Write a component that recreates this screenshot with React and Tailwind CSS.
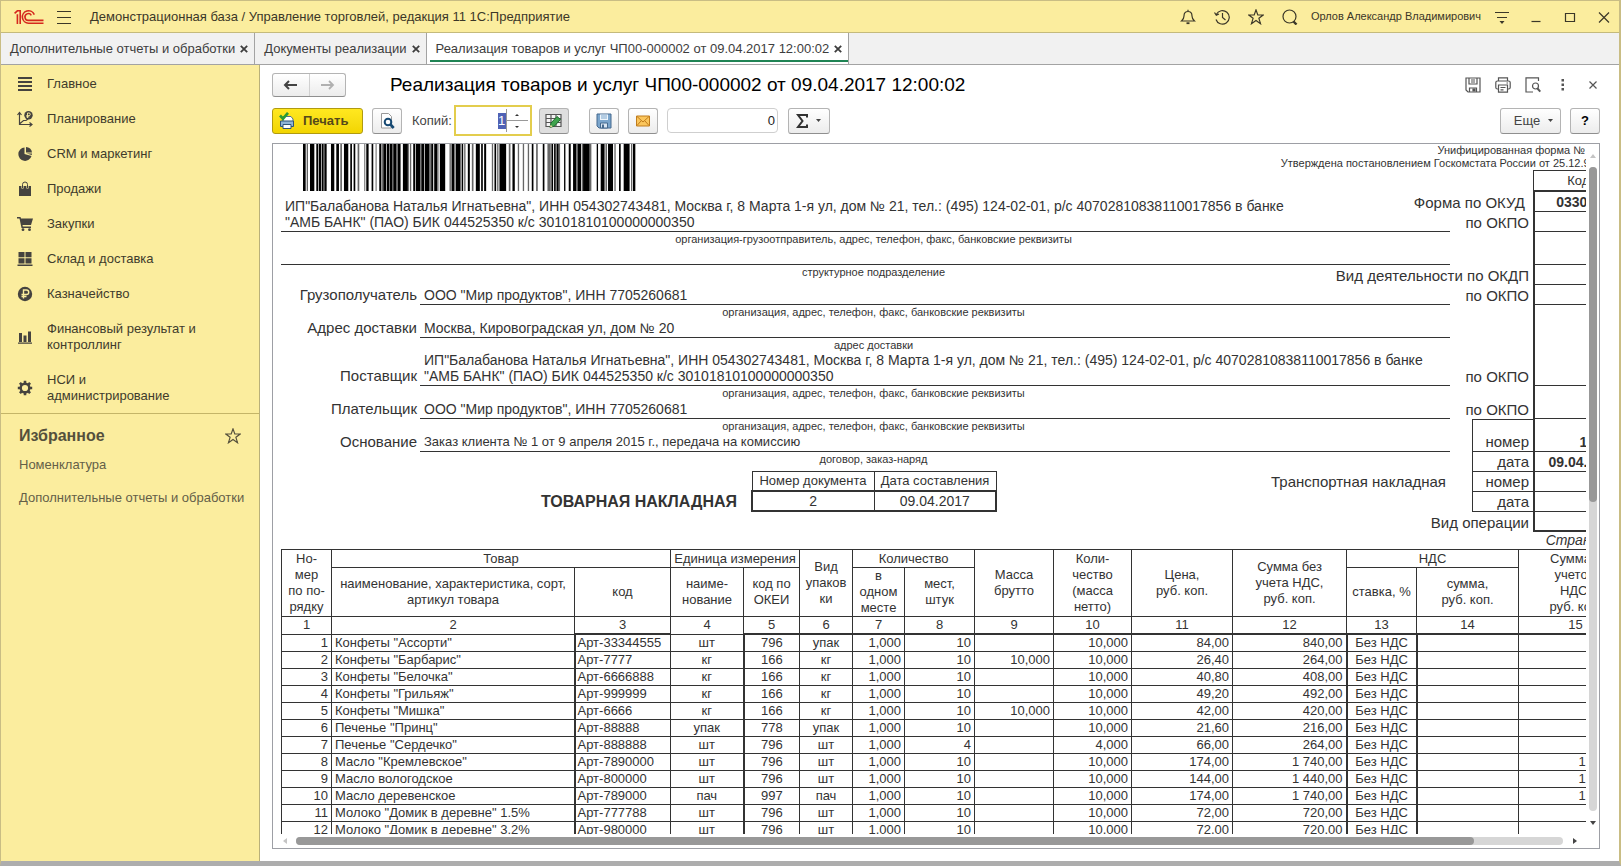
import { useState } from "react";

const sections = [
  { label: "Главное", icon: "main" },
  { label: "Планирование", icon: "plan" },
  { label: "CRM и маркетинг", icon: "pie" },
  { label: "Продажи", icon: "bag" },
  { label: "Закупки", icon: "cart" },
  { label: "Склад и доставка", icon: "boxes" },
  { label: "Казначейство", icon: "ruble" },
  { label: "Финансовый результат и контроллинг", icon: "bars" },
  { label: "НСИ и администрирование", icon: "gear" },
];

const favorites = ["Номенклатура", "Дополнительные отчеты и обработки"];

const docTitle = "Реализация товаров и услуг ЧП00-000002 от 09.04.2017 12:00:02";

const tabs = ["Дополнительные отчеты и обработки", "Документы реализации", docTitle];

const seller =
  'ИП"Балабанова Наталья Игнатьевна", ИНН 054302743481, Москва г, 8 Марта 1-я ул, дом № 21, тел.: (495) 124-02-01, р/с 40702810838110017856 в банке';
const sellerBank = '"АМБ БАНК" (ПАО) БИК 044525350 к/с 30101810100000000350';
const orgHint = "организация, адрес, телефон, факс, банковские реквизиты";

// name, article, unit, OKEI code, packing, places, gross, net, price, sum, total with VAT
const goods = [
  ['Конфеты "Ассорти"', "Арт-33344555", "шт", "796", "упак", "10", "", "10,000", "84,00", "840,00", "840,00"],
  ['Конфеты "Барбарис"', "Арт-7777", "кг", "166", "кг", "10", "10,000", "10,000", "26,40", "264,00", "264,00"],
  ['Конфеты "Белочка"', "Арт-6666888", "кг", "166", "кг", "10", "", "10,000", "40,80", "408,00", "408,00"],
  ['Конфеты "Грильяж"', "Арт-999999", "кг", "166", "кг", "10", "", "10,000", "49,20", "492,00", "492,00"],
  ['Конфеты "Мишка"', "Арт-6666", "кг", "166", "кг", "10", "10,000", "10,000", "42,00", "420,00", "420,00"],
  ['Печенье "Принц"', "Арт-88888", "упак", "778", "упак", "10", "", "10,000", "21,60", "216,00", "216,00"],
  ['Печенье "Сердечко"', "Арт-888888", "шт", "796", "шт", "4", "", "4,000", "66,00", "264,00", "264,00"],
  ['Масло "Кремлевское"', "Арт-7890000", "шт", "796", "шт", "10", "", "10,000", "174,00", "1 740,00", "1 740,00"],
  ["Масло вологодское", "Арт-800000", "шт", "796", "шт", "10", "", "10,000", "144,00", "1 440,00", "1 440,00"],
  ["Масло деревенское", "Арт-789000", "пач", "997", "пач", "10", "", "10,000", "174,00", "1 740,00", "1 740,00"],
  ['Молоко "Домик в деревне" 1.5%', "Арт-777788", "шт", "796", "шт", "10", "", "10,000", "72,00", "720,00", "720,00"],
  ['Молоко "Домик в деревне" 3.2%', "Арт-980000", "шт", "796", "шт", "10", "", "10,000", "72,00", "720,00", "720,00"],
];

const columnWidths = [50, 243, 96, 73, 56, 53, 52, 70, 79, 78, 101, 114, 70, 102, 114];

// [x, width] of each stripe
const blackBars = [
  [0, 8], [21, 13], [40, 6], [48, 6], [56, 6], [64, 7], [84, 10], [100, 8], [123, 13], [142, 5], [152, 5],
  [190, 7], [206, 5], [229, 6], [241, 9], [252, 7], [261, 8], [271, 10], [285, 8], [300, 15], [331, 6],
  [339, 13], [355, 9], [366, 14], [385, 6], [394, 9], [411, 16], [446, 8], [459, 14], [477, 4], [495, 6],
  [519, 12], [535, 5], [544, 6], [575, 5], [590, 20], [629, 7], [687, 5], [720, 5], [746, 5],
  [754, 5], [762, 6], [784, 4], [798, 6], [811, 10], [824, 11], [841, 20], [882, 4], [894, 10], [916, 15],
  [949, 5], [963, 16], [991, 7],
];
const grayBars = [
  [11, 4], [112, 5], [164, 5], [184, 3], [218, 3], [236, 4], [259, 2], [281, 4], [315, 3], [321, 4], [352, 3],
  [380, 4], [403, 4], [440, 4], [454, 4], [473, 3], [484, 4], [507, 5], [567, 4], [583, 4], [618, 5], [645, 4],
  [660, 4], [675, 4], [700, 5], [734, 10], [759, 3], [768, 4], [821, 3], [837, 4], [861, 5], [904, 4], [909, 4],
  [935, 4], [979, 3], [985, 4],
];

const Barcode = () => (
  <svg className="ml-[22px] h-[47px] w-[333px]" viewBox="0 0 1000 47" preserveAspectRatio="none">
    {blackBars.map(([x, w]) => (
      <rect key={x} x={x} width={w} height="47" fill="#000" />
    ))}
    {grayBars.map(([x, w]) => (
      <rect key={x} x={x} width={w} height="47" fill="#666" />
    ))}
  </svg>
);

const Logo = () => (
  <svg width="30" height="16" viewBox="0 0 30 16" fill="none" stroke="#d5281e" strokeWidth="1.6">
    <path d="M0.6 4.4 3.4 1.8H6.2V15M3.4 5.2V15" />
    <path d="M20.3 5.6A6.2 6.2 0 1 0 14.7 14.2H29.5" />
    <path d="M17.3 6.3A3.4 3.4 0 1 0 14.7 11.4H29.5" />
  </svg>
);

const SectionIcon = ({ name }) => {
  const c = "#45433f";
  return (
    <svg width="16" height="16" viewBox="0 0 16 16" fill={c} className="shrink-0">
      {name === "main" && <path d="M1 1h14v2H1zM1 5h14v2H1zM1 9h14v2H1zM1 13h14v2H1z" />}
      {name === "plan" && (
        <>
          <path d="M2.5 14V2M.5 4l2-2.5L4.5 4M2.5 13.500h12M12.500 11.500l2.500 2-2.500 2M3 12.500 6.500 9.500H9L11 8" fill="none" stroke={c} strokeWidth="1.200" />
          <circle cx="11.5" cy="4.200" r="4.200" />
          <path d="M10.500 7V2h1.500a1.200 1.200 0 0 1 0 2.600H9.300M9.300 5.800h3" fill="none" stroke="#fbed9e" strokeWidth="0.900" />
        </>
      )}
      {name === "pie" && (
        <>
          <path d="M7.500 1.500A6.700 6.700 0 1 0 14.500 10L7.500 8z" />
          <path d="M9 1a6 6 0 0 1 6 5.500H9zM9.500 7.500H15L14.800 9z" />
        </>
      )}
      {name === "bag" && (
        <>
          <path d="M2 5h12v10H2z" />
          <path d="M5.500 7.500V3.500a2.500 2.500 0 0 1 5 0v4" fill="none" stroke="#fbed9e" strokeWidth="2.200" />
          <path d="M5.500 7V3.500a2.500 2.500 0 0 1 5 0V7" fill="none" stroke={c} strokeWidth="1" />
        </>
      )}
      {name === "cart" && (
        <>
          <path d="M0 1h3.500l.5 1.500h12L14 9H5.500l.3 1.500H14V12H4.500L2.500 2.500H0z" />
          <circle cx="6" cy="13.700" r="1.400" />
          <circle cx="12.500" cy="13.700" r="1.400" />
        </>
      )}
      {name === "boxes" && <path d="M1.500 1h6v5.300h-6zM8.500 1h6v5.300h-6zM1.500 7.200h6v5.300h-6zM8.500 7.200h6v5.300h-6zM.5 13.500h15V15H.5z" />}
      {name === "ruble" && (
        <>
          <circle cx="8" cy="8" r="7.200" />
          <path d="M6.500 12.500V4h3a2.200 2.200 0 0 1 0 4.500h-5M4.500 10.500h5" fill="none" stroke="#fbed9e" strokeWidth="1.400" />
        </>
      )}
      {name === "bars" && <path d="M2 4h3v9H2zM6.500 6.500h3V13h-3zM11 2.500h3V13h-3zM1 13.500h14v1.200H1z" />}
      {name === "gear" && (
        <>
          <circle cx="8" cy="8" r="4.300" fill="none" stroke={c} strokeWidth="2.400" />
          <path d="M8 .8v3M8 12.200v3M.8 8h3M12.200 8h3M2.900 2.900 5 5M11 11l2.100 2.100M13.100 2.900 11 5M5 11l-2.100 2.100" stroke={c} strokeWidth="2.600" />
        </>
      )}
    </svg>
  );
};

const Star = () => (
  <svg width="16" height="16" viewBox="0 0 16 16" fill="none" stroke="currentColor" strokeWidth="1.200">
    <path d="M8 .9 9.800 6h5.400l-4.300 3.300 1.600 5.400L8 11.500l-4.500 3.200 1.600-5.400L.8 6h5.400z" />
  </svg>
);

const Line = ({ children, size = 16 }) => (
  <svg width={size} height={size} viewBox="0 0 16 16" fill="none" stroke="currentColor" strokeWidth="1.200">
    {children}
  </svg>
);

const IconButton = ({ label, children, className = "" }) => (
  <button aria-label={label} className={`flex h-6 items-center justify-center ${className}`}>
    {children}
  </button>
);

const ToolButton = ({ label, children, className = "bg-linear-to-b from-white to-[#ececec]" }) => (
  <button
    aria-label={label}
    className={`flex h-[26px] w-[30px] items-center justify-center rounded-[3px] border border-[#b4b4b4] border-b-[#8f8f8f] ${className}`}
  >
    {children}
  </button>
);

const TitleBar = () => (
  <header className="flex h-8 items-center border-b border-[#c4ba7c] bg-[#fbed9e] pl-[13px] text-[#3b3728]">
    <Logo />
    <IconButton label="Меню" className="ml-3">
      <Line>
        <path d="M1 2.500h14M1 8.500h14M1 14.500h14" />
      </Line>
    </IconButton>
    <h1 className="ml-[18px] text-[13px]">
      Демонстрационная база / Управление торговлей, редакция 11 1С:Предприятие
    </h1>
    <div className="ml-auto flex items-center gap-1">
      <IconButton label="Оповещения" className="w-[30px]">
        <Line>
          <path d="M1.500 12c1.500-1.200 2.500-2.500 2.500-5 0-2.700 1.500-4.500 4-4.500S12 4.300 12 7c0 2.500 1 3.800 2.500 5zM8 2.500V.8" />
          <path d="M6.500 14.200h3" strokeWidth="1.800" />
        </Line>
      </IconButton>
      <IconButton label="История" className="w-[30px]">
        <Line>
          <path d="M2.300 5.500A6.800 6.800 0 1 1 2 10.500M8.500 4v4.500l3 2.500M.5 3.500l1.800 2.700L5 5" />
        </Line>
      </IconButton>
      <IconButton label="Избранное" className="w-[30px]">
        <Star />
      </IconButton>
      <IconButton label="Поиск" className="w-[30px]">
        <Line>
          <circle cx="7.500" cy="7.500" r="6.500" />
          <path d="m11.500 12.500 3 3" strokeWidth="2.400" />
        </Line>
      </IconButton>
      <span className="px-[2px] text-[11px]">Орлов Александр Владимирович</span>
      <IconButton label="Настройки" className="w-[30px]">
        <Line>
          <path d="M1 3.500h14M3 8.500h10" />
          <path d="M5.500 12h5L8 15z" fill="currentColor" stroke="none" />
        </Line>
      </IconButton>
      <IconButton label="Свернуть" className="w-[30px]">
        <Line>
          <path d="M3.500 12.500h9" />
        </Line>
      </IconButton>
      <IconButton label="Развернуть" className="w-[30px]">
        <Line>
          <path d="M3.500 4.500h9v8h-9z" />
        </Line>
      </IconButton>
      <IconButton label="Закрыть" className="w-[30px]">
        <Line>
          <path d="m3 3.500 10 10M13 3.500l-10 10" />
        </Line>
      </IconButton>
    </div>
  </header>
);

const TabBar = ({ active, onSelect }) => (
  <nav className="flex h-8 border-b border-[#a3a3a3] bg-[#f1f1f1] text-[13px] text-[#3d3d3d]">
    {tabs.map((tab, i) => (
      <div
        key={tab}
        className={`flex items-center gap-[5px] border-r border-[#a3a3a3] pr-[6px] pl-[9px] ${
          active === i
            ? "bg-white shadow-[inset_3px_0_0_white,inset_0_-2px_0_white,inset_0_-4px_0_#1f8454]"
            : ""
        }`}
      >
        <button onClick={() => onSelect(i)}>{tab}</button>
        <button aria-label="Закрыть вкладку">
          <svg width="8" height="8" viewBox="0 0 8 8" stroke="#3d3d3d" strokeWidth="1.800">
            <path d="m.8.8 6.400 6.400M7.200.8.8 7.200" />
          </svg>
        </button>
      </div>
    ))}
  </nav>
);

const Sidebar = () => (
  <aside className="w-[259px] shrink-0 border-r border-[#b9b07a] bg-[#fbed9e] text-[13px] leading-4 text-[#403b2c]">
    <ul className="flex flex-col gap-[19px] border-b border-[#c4b568] pt-[11px] pr-12 pb-[9px] pl-4">
      {sections.map((s) => (
        <li key={s.label}>
          <a href="#" className="flex items-center gap-[14px]">
            <SectionIcon name={s.icon} />
            <span>{s.label}</span>
          </a>
        </li>
      ))}
    </ul>
    <div className="px-[18px] pt-3">
      <div className="flex items-center justify-between text-[#55503c]">
        <h2 className="text-[16px] leading-5 font-bold">Избранное</h2>
        <button aria-label="Настроить избранное">
          <Star />
        </button>
      </div>
      <ul className="mt-[11px] flex flex-col gap-[17px] whitespace-nowrap text-[#645f48]">
        {favorites.map((f) => (
          <li key={f}>
            <a href="#">{f}</a>
          </li>
        ))}
      </ul>
    </div>
  </aside>
);

const FormHeader = () => (
  <div className="flex h-6 items-center">
    <div className="flex h-6 w-[74px] rounded-[3px] border border-[#b4b4b4] border-b-[#8f8f8f] bg-linear-to-b from-white to-[#ececec]">
      <button aria-label="Назад" className="flex flex-1 items-center justify-center border-r border-[#d0d0d0]">
        <svg width="15" height="12" viewBox="0 0 15 12" fill="none" stroke="#444" strokeWidth="2">
          <path d="M14 6H2M6 2 2 6l4 4" />
        </svg>
      </button>
      <button aria-label="Вперед" className="flex flex-1 items-center justify-center">
        <svg width="15" height="12" viewBox="0 0 15 12" fill="none" stroke="#b0b0b0" strokeWidth="1.800">
          <path d="M1 6h12M9 2l4 4-4 4" />
        </svg>
      </button>
    </div>
    <h2 className="ml-11 text-[19px] text-black">{docTitle}</h2>
    <div className="-mr-2 ml-auto flex items-center text-[#555]">
      <IconButton label="Сохранить" className="w-[30px]">
        <Line>
          <path d="M1 1h14v14H3l-2-2zM4 1v6h8V1M6 3h4M6 5h4" />
          <path d="M4.500 15v-4h7v4" />
          <path d="M8 12h2v2H8z" fill="currentColor" />
        </Line>
      </IconButton>
      <IconButton label="Печать" className="w-[30px]">
        <Line>
          <path d="M3.500 4V.8h9V4M3.500 12H2.500C1.500 12 .8 11.500.8 10.500v-5C.8 4.500 1.500 4 2.500 4h11c1 0 1.700.5 1.700 1.500v5c0 1-.7 1.500-1.700 1.500h-1" />
          <path d="M3.500 8h9v7.200h-9zM5.500 10.500h5M5.500 12.800h3M11.500 6h1.500" />
        </Line>
      </IconButton>
      <IconButton label="Просмотр" className="w-[30px]">
        <Line>
          <path d="M13.500 4V.8H1V15h7" />
          <circle cx="10.500" cy="9" r="3" />
          <path d="m12.500 11.500 2.800 3.200" strokeWidth="2" />
        </Line>
      </IconButton>
      <IconButton label="Еще действия" className="w-[30px]">
        <svg width="4" height="12" viewBox="0 0 4 12" fill="#555">
          <path d="M.5 0h2.500v2.500H.5zM.5 4.500h2.500V7H.5zM.5 9h2.500v2.500H.5z" />
        </svg>
      </IconButton>
      <IconButton label="Закрыть форму" className="w-[30px]">
        <svg width="8" height="8" viewBox="0 0 8 8" stroke="#555" strokeWidth="1.200">
          <path d="m.5.5 7 7M7.500.5l-7 7" />
        </svg>
      </IconButton>
    </div>
  </div>
);

const Toolbar = () => {
  const [copies, setCopies] = useState("1");

  return (
    <div className="mt-2 flex h-[31px] items-center text-[13px] text-[#444]">
      <button className="flex h-[26px] w-[91px] items-center gap-2 rounded-[3px] border border-[#b09a10] bg-linear-to-b from-[#ffe81f] to-[#f2d500] pl-1.5 font-bold text-[#54491a]">
        <svg width="16" height="18" viewBox="0 0 16 18">
          <path d="M4 8V4.500h8L14 7v3H4z" fill="#fff" stroke="#50708c" />
          <path d="M1.500 9h13v5.500h-13z" fill="#8fb4d6" stroke="#2f5478" />
          <path d="M4 12.500h8v4H4z" fill="#fff" stroke="#2f5478" />
          <path d="m1 3.500 3 3.200L9 .8" fill="none" stroke="#2a9b32" strokeWidth="2.600" />
        </svg>
        Печать
      </button>
      <div className="ml-[9px]">
        <ToolButton label="Предварительный просмотр">
          <svg width="16" height="16" viewBox="0 0 16 16" fill="none">
            <path d="M2.500.5h7l3 3V15h-10z" fill="#fff" stroke="#999" />
            <circle cx="9" cy="9" r="3.300" stroke="#174a73" strokeWidth="2" />
            <path d="m11.500 11.500 3.200 3.500" stroke="#174a73" strokeWidth="2.600" />
          </svg>
        </ToolButton>
      </div>
      <label htmlFor="copies" className="ml-[10px]">
        Копий:
      </label>
      <div className="ml-[2px] flex h-[31px] w-[78px] items-center border-2 border-[#e3cd4d] bg-white pr-[2px]">
        <input
          id="copies"
          value={copies}
          onChange={(e) => setCopies(e.target.value)}
          className="ml-auto h-4 w-2 bg-[#4f62b5] text-white outline-none"
        />
        <div className="flex h-[23px] w-[22px] flex-col border-l border-[#999]">
          <button aria-label="Увеличить" className="flex flex-1 items-center justify-center border-b border-[#999]">
            <svg width="4" height="2" viewBox="0 0 4 2" fill="#333">
              <path d="M0 2 2 0l2 2z" />
            </svg>
          </button>
          <button aria-label="Уменьшить" className="flex flex-1 items-center justify-center">
            <svg width="4" height="2" viewBox="0 0 4 2" fill="#333">
              <path d="m0 0 2 2 2-2z" />
            </svg>
          </button>
        </div>
      </div>
      <div className="ml-[7px]">
        <ToolButton label="Редактирование" className="bg-[#dedede]">
          <svg width="17" height="16" viewBox="0 0 17 16" fill="none">
            <path d="M1 1.500h15v12H1z" fill="#f4f4f4" />
            <path d="M1 1.500h15v12H1zM1 5.500h15M1 9.500h15M6 1.500v12M11 1.500v12" stroke="#555" strokeWidth="1.200" />
            <path d="m5 14.500 1-4.500 6-6.500 3.500 3-6 6.500z" fill="#3fa34d" stroke="#1c6b2b" />
            <path d="m5 14.500.6-2.700 2 1.800z" fill="#f0d9a0" />
          </svg>
        </ToolButton>
      </div>
      <div className="ml-5 flex gap-[9px]">
        <ToolButton label="Сохранить файл">
          <svg width="16" height="16" viewBox="0 0 16 16">
            <path d="M1 1h14v14H3l-2-2z" fill="#7aa5cc" stroke="#44698e" />
            <path d="M4 1.500h8V7H4z" fill="#eef5fb" />
            <path d="M5 3h6M5 5h6" stroke="#7aa5cc" />
            <path d="M4.500 10h7v5h-7z" fill="#d9e6f2" stroke="#44698e" />
            <path d="M6 11.500h2V15H6z" fill="#44698e" />
          </svg>
        </ToolButton>
        <ToolButton label="Отправить почтой">
          <svg width="14" height="12" viewBox="0 0 14 12">
            <path d="M.5 1h13v10H.5z" fill="#fbc65c" stroke="#c07c1c" />
            <path d="m1 1.500 6 5.500 6-5.500M1 10.500l4-4.500M13 10.500 9 6" fill="none" stroke="#c07c1c" />
          </svg>
        </ToolButton>
        <input
          aria-label="Сумма"
          defaultValue="0"
          className="h-[25px] w-[111px] rounded border border-[#cfcfcf] bg-white px-[2px] text-right text-[#222]"
        />
      </div>
      <button
        aria-label="Сумма выделенных"
        className="ml-[10px] flex h-[26px] w-[42px] items-center justify-center gap-2 rounded-[3px] border border-[#b4b4b4] border-b-[#8f8f8f] bg-linear-to-b from-white to-[#ececec]"
      >
        <svg width="12" height="14" viewBox="0 0 12 14" fill="none" stroke="#333" strokeWidth="2">
          <path d="M11 3.500V1H2l4.500 6L2 13h9v-2.500" />
        </svg>
        <Caret />
      </button>
      <div className="ml-auto flex gap-[9px]">
        <button className="flex h-[26px] w-[61px] items-center justify-center gap-2 rounded-[3px] border border-[#b4b4b4] border-b-[#8f8f8f] bg-linear-to-b from-white to-[#ececec] pl-1.5">
          Еще
          <Caret />
        </button>
        <ToolButton label="Справка">
          <span className="font-bold text-black">?</span>
        </ToolButton>
      </div>
    </div>
  );
};

const Caret = () => (
  <svg width="5" height="3" viewBox="0 0 5 3" fill="#444">
    <path d="M0 0h5L2.500 3z" />
  </svg>
);

const Hint = ({ children }) => <p className="pl-4 text-center text-[11px] leading-[14px]">{children}</p>;

const Field = ({ label, className = "h-[19px]", children }) => (
  <div className={`flex items-end text-[14px] leading-4 ${className}`}>
    <span className="w-[139px] pr-[3px] pb-[2px] text-right text-[15px]">{label}</span>
    <span className="flex-1 border-b border-[#333] pb-px pl-1">{children}</span>
  </div>
);

const CodeRow = ({ label, code, height = "h-5", boxed = false, top = false, line = true, labelClass = "" }) => (
  <div className={`flex text-[15px] leading-[18px] ${height}`}>
    <div className="flex min-w-0 flex-1 justify-end">
      <span
        className={`flex shrink-0 items-end justify-end whitespace-nowrap pr-1 ${
          boxed ? "w-[61px] border-b border-l border-[#333]" : ""
        } ${top ? "border-t" : ""} ${labelClass}`}
      >
        {label}
      </span>
    </div>
    <div
      className={`flex w-[99px] shrink-0 items-end justify-center border-l-2 border-[#333] text-[14px] font-bold ${
        line ? "border-b" : "border-b-2"
      }`}
    >
      {code}
    </div>
  </div>
);

const Requisites = () => (
  <div className="flex">
    <div className="flex-1">
      <Barcode />
      <p className="h-[41px] border-b border-[#333] pt-[7px] pl-1 text-[14px] leading-4">
        {seller}
        <br />
        {sellerBank}
      </p>
      <div className="h-[33px] border-b border-[#333]">
        <Hint>организация-грузоотправитель, адрес, телефон, факс, банковские реквизиты</Hint>
      </div>
      <Hint>структурное подразделение</Hint>
      <Field label="Грузополучатель" className="h-[26px]">
        ООО "Мир продуктов", ИНН 7705260681
      </Field>
      <Hint>{orgHint}</Hint>
      <Field label="Адрес доставки">Москва, Кировоградская ул, дом № 20</Field>
      <Hint>адрес доставки</Hint>
      <Field label="Поставщик" className="h-[34px]">
        {seller}
        <br />
        {sellerBank}
      </Field>
      <Hint>{orgHint}</Hint>
      <Field label="Плательщик">ООО "Мир продуктов", ИНН 7705260681</Field>
      <Hint>{orgHint}</Hint>
      <Field label="Основание">
        <span className="text-[13px]">Заказ клиента № 1 от 9 апреля 2015 г., передача на комиссию</span>
      </Field>
      <Hint>договор, заказ-наряд</Hint>
      <div className="mt-[5px] flex">
        <h3 className="w-[470px] self-end pr-[14px] text-right text-[16px] leading-5 font-bold">
          ТОВАРНАЯ НАКЛАДНАЯ
        </h3>
        <table className="w-[246px] table-fixed border-collapse text-center text-[13px] leading-[18px]">
          <thead>
            <tr>
              <th className="border border-[#333] font-normal">Номер документа</th>
              <th className="border border-[#333] font-normal">Дата составления</th>
            </tr>
          </thead>
          <tbody>
            <tr className="border-2 border-[#333] text-[14px]">
              <td className="border-r border-[#333]">2</td>
              <td>09.04.2017</td>
            </tr>
          </tbody>
        </table>
        <span className="ml-auto pr-1 text-[15px] leading-[22px]">Транспортная накладная</span>
      </div>
    </div>

    <div className="w-[182px]">
      <div className="flex h-[26px] flex-col items-end text-[11px] leading-[13px] whitespace-nowrap">
        <span>Унифицированная форма № ТОРГ-12</span>
        <span>Утверждена постановлением Госкомстата России от 25.12.98 № 132</span>
      </div>
      <div className="ml-[83px] flex h-[22px] items-center justify-center border-t border-b-2 border-l border-[#333] text-[13px]">
        Коды
      </div>
      <CodeRow label="Форма по ОКУД" labelClass="pr-2" code="0330212" />
      <CodeRow label="по ОКПО" />
      <CodeRow height="h-[33px]" />
      <CodeRow label="Вид деятельности по ОКДП" />
      <CodeRow label="по ОКПО" />
      <CodeRow label="по ОКПО" height="h-[81px]" />
      <CodeRow label="по ОКПО" height="h-[33px]" />
      <CodeRow label="номер" height="h-[33px]" boxed top code="1" />
      <CodeRow label="дата" boxed code="09.04.2015" />
      <CodeRow label="номер" boxed />
      <CodeRow label="дата" boxed />
      <CodeRow label="Вид операции" line={false} />
      <p className="pr-[6px] text-right text-[14px] leading-[17px] italic">Страница 1</p>
    </div>
  </div>
);

const Head = ({ children, ...rest }) => (
  <th className="border border-[#333] p-0 font-normal whitespace-pre-line" {...rest}>
    {children}
  </th>
);

const GoodsTable = () => {
  const cell = "border border-[#333] p-0";
  const num = `${cell} pr-[3px] text-right`;
  const mid = `${cell} text-center`;

  return (
    <table className="w-full table-fixed border-collapse text-[13px] leading-4 whitespace-nowrap">
      <colgroup>
        {columnWidths.map((w, i) => (
          <col key={i} style={{ width: w }} />
        ))}
      </colgroup>
      <thead>
        <tr className="h-[18px]">
          <Head rowSpan={2}>{"Но-\nмер\nпо по-\nрядку"}</Head>
          <Head colSpan={2}>Товар</Head>
          <Head colSpan={2}>Единица измерения</Head>
          <Head rowSpan={2}>{"Вид\nупаков\nки"}</Head>
          <Head colSpan={2}>Количество</Head>
          <Head rowSpan={2}>{"Масса\nбрутто"}</Head>
          <Head rowSpan={2}>{"Коли-\nчество\n(масса\nнетто)"}</Head>
          <Head rowSpan={2}>{"Цена,\nруб. коп."}</Head>
          <Head rowSpan={2}>{"Сумма без\nучета НДС,\nруб. коп."}</Head>
          <Head colSpan={2}>НДС</Head>
          <Head rowSpan={2}>{"Сумма с\nучетом\nНДС,\nруб. коп."}</Head>
        </tr>
        <tr className="h-[49px]">
          <Head>{"наименование, характеристика, сорт,\nартикул товара"}</Head>
          <Head>код</Head>
          <Head>{"наиме-\nнование"}</Head>
          <Head>{"код по\nОКЕИ"}</Head>
          <Head>{"в\nодном\nместе"}</Head>
          <Head>{"мест,\nштук"}</Head>
          <Head>ставка, %</Head>
          <Head>{"сумма,\nруб. коп."}</Head>
        </tr>
        <tr className="h-[17px]">
          {columnWidths.map((w, i) => (
            <th
              key={i}
              className={`border border-[#333] p-0 font-normal ${i === 2 || i > 3 ? "border-b-2" : ""}`}
            >
              {i + 1}
            </th>
          ))}
        </tr>
      </thead>
      <tbody>
        {goods.map(([name, art, unit, okei, pack, places, gross, net, price, sum, total], i) => (
          <tr key={art} className="h-[17px]">
            <td className={num}>{i + 1}</td>
            <td className={`${cell} pl-[3px]`}>{name}</td>
            <td className={`${cell} border-l-2 pl-[2px]`}>{art}</td>
            <td className={mid}>{unit}</td>
            <td className={`${mid} border-l-2`}>{okei}</td>
            <td className={mid}>{pack}</td>
            <td className={num}>1,000</td>
            <td className={num}>{places}</td>
            <td className={num}>{gross}</td>
            <td className={num}>{net}</td>
            <td className={num}>{price}</td>
            <td className={num}>{sum}</td>
            <td className={`${mid} border-x-2`}>Без НДС</td>
            <td className={num}></td>
            <td className={num}>{total}</td>
          </tr>
        ))}
      </tbody>
    </table>
  );
};

const Arrow = ({ d, color = "#444" }) => (
  <svg width="6" height="6" viewBox="0 0 6 6" fill={color}>
    <path d={d} />
  </svg>
);

const DocumentView = () => (
  <div className="mt-[7px] flex min-h-0 flex-1 flex-col border border-[#9d9fa5] bg-white">
    <div className="flex min-h-0 flex-1">
      <div className="min-w-0 flex-1 overflow-hidden">
        <div className="w-[1367px] px-2 text-[#333]">
          <Requisites />
          <GoodsTable />
        </div>
      </div>
      <div className="flex w-[13px] flex-col items-center">
        <div className="flex h-[23px] items-center">
          <Arrow d="M0 5 3 1l3 4z" color="#c4c4c4" />
        </div>
        <div className="w-2 flex-1 rounded-full bg-[#d6d6d6]">
          <div className="h-[52%] rounded-full bg-[#989898]" />
        </div>
        <div className="flex h-[23px] items-center">
          <Arrow d="M0 1h6L3 5z" />
        </div>
      </div>
    </div>
    <div className="flex h-[14px] items-center pr-[13px]">
      <div className="flex w-[23px] justify-center">
        <Arrow d="M5 0v6L1 3z" color="#c4c4c4" />
      </div>
      <div className="h-2 flex-1 rounded-full bg-[#d6d6d6]">
        <div className="h-2 w-[93%] rounded-full bg-[#989898]" />
      </div>
      <div className="flex w-[23px] justify-center">
        <Arrow d="M1 0v6l4-3z" />
      </div>
    </div>
  </div>
);

const App = () => {
  const [activeTab, setActiveTab] = useState(2);

  return (
    <div className="flex h-screen flex-col overflow-hidden border-t border-r-2 border-b-5 border-l border-[#c9bd84] border-b-[#adadad] font-['Liberation_Sans',Arial,sans-serif]">
      <TitleBar />
      <TabBar active={activeTab} onSelect={setActiveTab} />
      <div className="flex min-h-0 flex-1">
        <Sidebar />
        <main className="flex min-w-0 flex-1 flex-col bg-white pt-2 pr-[19px] pb-3 pl-3">
          <FormHeader />
          <Toolbar />
          <DocumentView />
        </main>
      </div>
    </div>
  );
};

export default App;
